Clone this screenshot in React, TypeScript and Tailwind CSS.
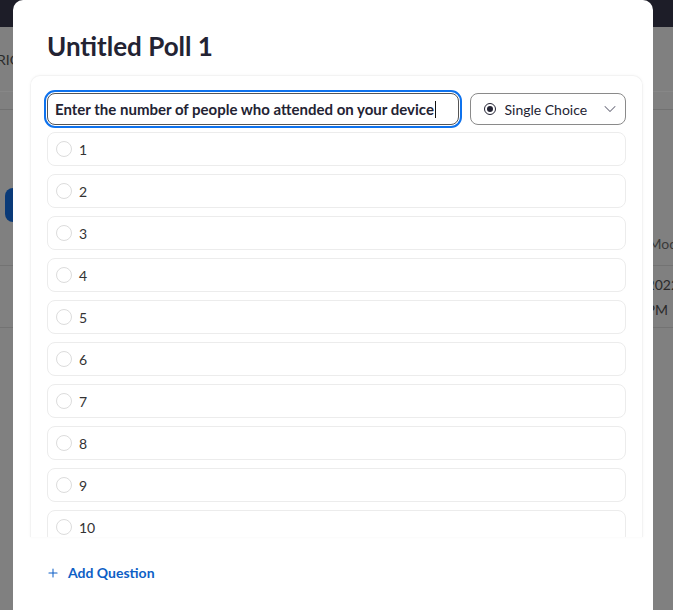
import { Plus, ChevronDown } from 'lucide-react';

const options = ['1', '2', '3', '4', '5', '6', '7', '8', '9', '10'];

const PageBehind = () => {
  return (
    <div className="flex h-full flex-col bg-[#808080] text-[14px] text-[#2a2a2a]">
      <div className="h-[27px] bg-[#1d1d28]" />
      <div className="flex h-[65px] items-center border-b border-[#878787]">
        <span className="-ml-[3px]">RIC</span>
      </div>
      <div className="h-[18px] border-b border-[#717171]" />
      <div className="h-[78px]" />
      <div className="flex h-[34px] items-center">
        <div className="ml-[5px] h-[34px] w-[30px] rounded-l-[8px] bg-[#0a3a78]" />
      </div>
      <div className="flex h-[44px] items-center justify-end border-b border-[#737373]">
        <span className="-mr-[4px] text-[#3a3a3a]">Mod</span>
      </div>
      <div className="flex h-[62px] flex-col items-end justify-center border-b border-[#737373] leading-[25px]">
        <span className="-mr-[6px]">2022</span>
        <span className="mr-[5px]">PM</span>
      </div>
    </div>
  );
};

const OptionRow = ({ label }: { label: string }) => (
  <div className="flex h-[34px] shrink-0 items-center rounded-[8px] border border-[#ececec] pl-[8px]">
    <span className="h-[16px] w-[16px] rounded-full border border-[#dcdcdc]" />
    <span className="ml-[7px] text-[14px] text-[#333]">{label}</span>
  </div>
);

export default function App() {
  return (
    <div className="relative h-[610px] w-[673px] overflow-hidden font-['Lato',sans-serif]">
      <PageBehind />

      <div className="absolute left-[13px] top-0 flex h-[630px] w-[640px] flex-col rounded-[10px] bg-white">
        <h1 className="pl-[34px] pt-[30px] text-[26px] font-bold leading-[32px] text-[#232333]">
          Untitled Poll 1
        </h1>

        <div className="ml-[17px] mr-[10px] mt-[13px] h-[462px] overflow-hidden rounded-t-[10px] border border-b-0 border-[#f3f3f3] px-[16px] pt-[17px] shadow-[0_0_3px_rgba(0,0,0,0.04)]">
          <div className="flex items-center gap-[11px]">
            <div className="flex h-[32px] w-[413px] items-center rounded-[8px] border border-[#555] pl-[7px] outline-2 outline-offset-1 outline-[#0e72ed]">
              <span className="text-[15px] font-bold text-[#232333]">
                Enter the number of people who attended on your device
              </span>
              <span className="ml-px h-[17px] w-px bg-[#111]" />
            </div>
            <div className="flex h-[32px] w-[157px] items-center rounded-[8px] border border-[#8a8a8a] pl-[13px] pr-[5px]">
              <span className="flex h-[12px] w-[12px] items-center justify-center rounded-full border border-[#232333]">
                <span className="h-[6px] w-[6px] rounded-full bg-[#232333]" />
              </span>
              <span className="ml-[9px] flex-1 text-[14px] text-[#232333]">Single Choice</span>
              <ChevronDown className="h-[20px] w-[20px] text-[#6e6e7e]" strokeWidth={1.25} />
            </div>
          </div>

          <div className="mt-[7px] flex flex-col gap-[8px]">
            {options.map((o) => (
              <OptionRow key={o} label={o} />
            ))}
          </div>
        </div>

        <button className="ml-[33px] mt-[25px] flex items-center gap-[8px] text-[14px] font-bold text-[#0e5fc6]">
          <Plus className="h-[14px] w-[14px]" strokeWidth={1.75} />
          Add Question
        </button>
      </div>
    </div>
  );
}
